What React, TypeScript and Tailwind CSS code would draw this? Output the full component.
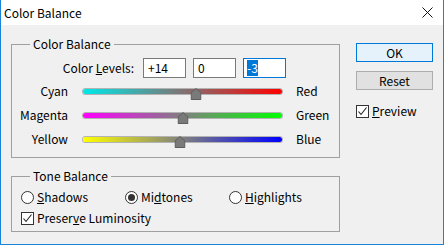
import React from 'react';

type Slider = { left: string; right: string; from: string; to: string; value: number };

const sliders: Slider[] = [
  { left: 'Cyan', right: 'Red', from: '#00e8e8', to: '#ff0000', value: 14 },
  { left: 'Magenta', right: 'Green', from: '#ff00ff', to: '#00ff00', value: 0 },
  { left: 'Yellow', right: 'Blue', from: '#ffff00', to: '#0000ff', value: -3 },
];

function Thumb() {
  return (
    <svg width="11" height="12" viewBox="0 0 11 12" className="block">
      <path d="M5.5 0.5 L10.5 5 L10.5 11.5 L0.5 11.5 L0.5 5 Z" fill="#7a7a7a" stroke="#5e5e5e" strokeWidth="1" />
    </svg>
  );
}

function Track({ s }: { s: Slider }) {
  const pct = ((s.value + 100) / 200) * 100;
  return (
    <div className="relative ml-[15px] w-[199px] h-[5px]">
      <div
        className="h-full w-full rounded-full ring-1 ring-[#8a8a8a]/60"
        style={{ background: `linear-gradient(to right, ${s.from}, ${s.to})` }}
      />
      <div className="absolute top-[-1px] -translate-x-1/2" style={{ left: `${pct}%` }}>
        <Thumb />
      </div>
    </div>
  );
}

function Radio({ checked, children }: { checked?: boolean; children: React.ReactNode }) {
  return (
    <div className="flex items-center w-[104px]">
      <span className="flex items-center justify-center w-[13px] h-[13px] rounded-full border border-[#333] bg-white">
        {checked && <span className="w-[7px] h-[7px] rounded-full bg-[#333]" />}
      </span>
      <span className="ml-[3px]">{children}</span>
    </div>
  );
}

function Check({ children }: { children: React.ReactNode }) {
  return (
    <div className="flex items-center">
      <span className="flex items-center justify-center w-[13px] h-[13px] border border-[#333] bg-white">
        <svg width="11" height="11" viewBox="0 0 11 11">
          <path d="M1.5 5.5 L4 8.5 L9.5 1.5" fill="none" stroke="#222" strokeWidth="1.1" />
        </svg>
      </span>
      <span className="ml-[3px]">{children}</span>
    </div>
  );
}

export default function App() {
  return (
    <div
      className="w-[444px] h-[245px] flex flex-col border-x border-b border-[#1883d7] bg-[#f0f0f0] text-[12px] leading-[16px] text-black"
      style={{ fontFamily: '"Noto Sans CJK KR", "Noto Sans", sans-serif' }}
    >
      <div className="h-[25px] flex items-center justify-between bg-white pl-[3px] pr-[10px]">
        <span className="text-[12px]">Color Balance</span>
        <svg width="11" height="11" viewBox="0 0 11 11">
          <path d="M0.5 0.5 L10.5 10.5 M10.5 0.5 L0.5 10.5" stroke="#111" strokeWidth="1" />
        </svg>
      </div>

      <div className="flex pl-[10px] pt-[11px]">
        <div className="w-[329px] flex flex-col">
          <fieldset className="border border-[#a0a0a0] pb-[6px]">
            <legend className="ml-[18px] px-[3px] leading-[16px]">Color Balance</legend>
            <div className="flex items-center mt-[6px] h-[20px]">
              <span className="w-[122px] text-right">
                Color <u>L</u>evels:
              </span>
              <div className="ml-[9px] w-[43px] h-[20px] border border-[#7a7a7a] bg-white pl-[4px] flex items-center">+14</div>
              <div className="ml-[7px] w-[43px] h-[20px] border border-[#7a7a7a] bg-white pl-[4px] flex items-center">0</div>
              <div className="ml-[7px] w-[43px] h-[20px] border border-[#0078d7] bg-white pl-[3px] flex items-center">
                <span className="bg-[#0078d7] text-white">-3</span>
              </div>
            </div>
            <div className="mt-[1px]">
              {sliders.map((s) => (
                <div key={s.left} className="flex items-center h-[24px]">
                  <span className="w-[56px] text-right">{s.left}</span>
                  <Track s={s} />
                  <span className="ml-[14px]">{s.right}</span>
                </div>
              ))}
            </div>
          </fieldset>

          <fieldset className="mt-[10px] border border-[#a0a0a0] pb-[5px] pl-[9px]">
            <legend className="ml-[9px] px-[3px] leading-[16px]">Tone Balance</legend>
            <div className="flex items-center mt-[5px] h-[16px]">
              <Radio>
                <u>S</u>hadows
              </Radio>
              <Radio checked>
                Mi<u>d</u>tones
              </Radio>
              <Radio>
                <u>H</u>ighlights
              </Radio>
            </div>
            <div className="mt-[5px] h-[16px] flex items-center">
              <Check>
                Preser<u>v</u>e Luminosity
              </Check>
            </div>
          </fieldset>
        </div>

        <div className="ml-[16px] mt-[7px] flex flex-col w-[77px]">
          <button className="h-[19px] border border-[#0078d7] bg-[#e5f1fb] flex items-center justify-center">OK</button>
          <button className="mt-[9px] h-[19px] border border-[#adadad] bg-[#e1e1e1] flex items-center justify-center">Reset</button>
          <div className="mt-[13px]">
            <Check>
              <u>P</u>review
            </Check>
          </div>
        </div>
      </div>
    </div>
  );
}
